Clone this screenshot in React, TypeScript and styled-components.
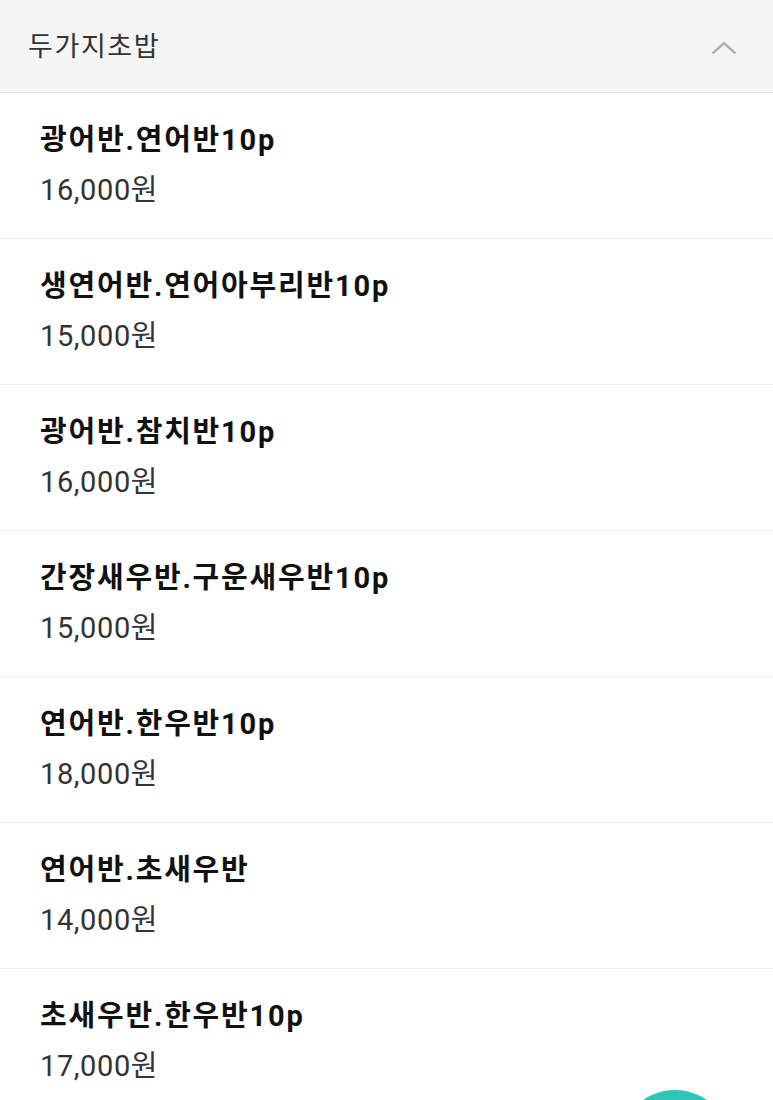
import styled, { createGlobalStyle } from "styled-components";

const GlobalStyle = createGlobalStyle`
  html, body {
    margin: 0;
    padding: 0;
    background: #ffffff;
    font-family: Roboto, "Noto Sans CJK KR", "Noto Sans", sans-serif;
  }
`;

const Page = styled.div`
  width: 773px;
  height: 1100px;
  overflow: hidden;
  position: relative;
  background: #ffffff;
`;

const Header = styled.div`
  height: 93px;
  box-sizing: border-box;
  background: #f5f5f5;
  border-bottom: 1px solid #e2e2e2;
  display: flex;
  align-items: center;
  justify-content: space-between;
  padding: 3px 36px 0 28px;
`;

const HeaderTitle = styled.h2`
  margin: 0;
  font-size: 27px;
  letter-spacing: 1.6px;
  font-weight: 400;
  color: #333333;
  line-height: 1;
`;

const List = styled.ul`
  list-style: none;
  margin: 0;
  padding: 0;
`;

const Item = styled.li`
  height: 146px;
  box-sizing: border-box;
  padding: 27px 40px 0;
  border-bottom: 1px solid #efefef;
`;

const Name = styled.div`
  font-size: 29px;
  letter-spacing: 1.8px;
  font-weight: 700;
  color: #111111;
  line-height: 40px;
`;

const Price = styled.div`
  margin-top: 12px;
  font-size: 29px;
  letter-spacing: 0.6px;
  font-weight: 400;
  color: #333333;
  line-height: 36px;
`;

const Fab = styled.div`
  position: absolute;
  left: 619px;
  top: 1090px;
  width: 112px;
  height: 112px;
  border-radius: 50%;
  background: #2ec4b6;
`;

const menu = [
  { name: "광어반.연어반10p", price: "16,000원" },
  { name: "생연어반.연어아부리반10p", price: "15,000원" },
  { name: "광어반.참치반10p", price: "16,000원" },
  { name: "간장새우반.구운새우반10p", price: "15,000원" },
  { name: "연어반.한우반10p", price: "18,000원" },
  { name: "연어반.초새우반", price: "14,000원" },
  { name: "초새우반.한우반10p", price: "17,000원" },
];

const App = () => {
  return (
    <Page>
      <GlobalStyle />
      <Header>
        <HeaderTitle>두가지초밥</HeaderTitle>
        <svg width="26" height="14" viewBox="0 0 26 14" fill="none">
          <path d="M1.5 12.5 L13 2 L24.5 12.5" stroke="#b0b0b0" strokeWidth="2.4" />
        </svg>
      </Header>
      <List>
        {menu.map((m) => (
          <Item key={m.name}>
            <Name>{m.name}</Name>
            <Price>{m.price}</Price>
          </Item>
        ))}
      </List>
      <Fab />
    </Page>
  );
};

export default App;
